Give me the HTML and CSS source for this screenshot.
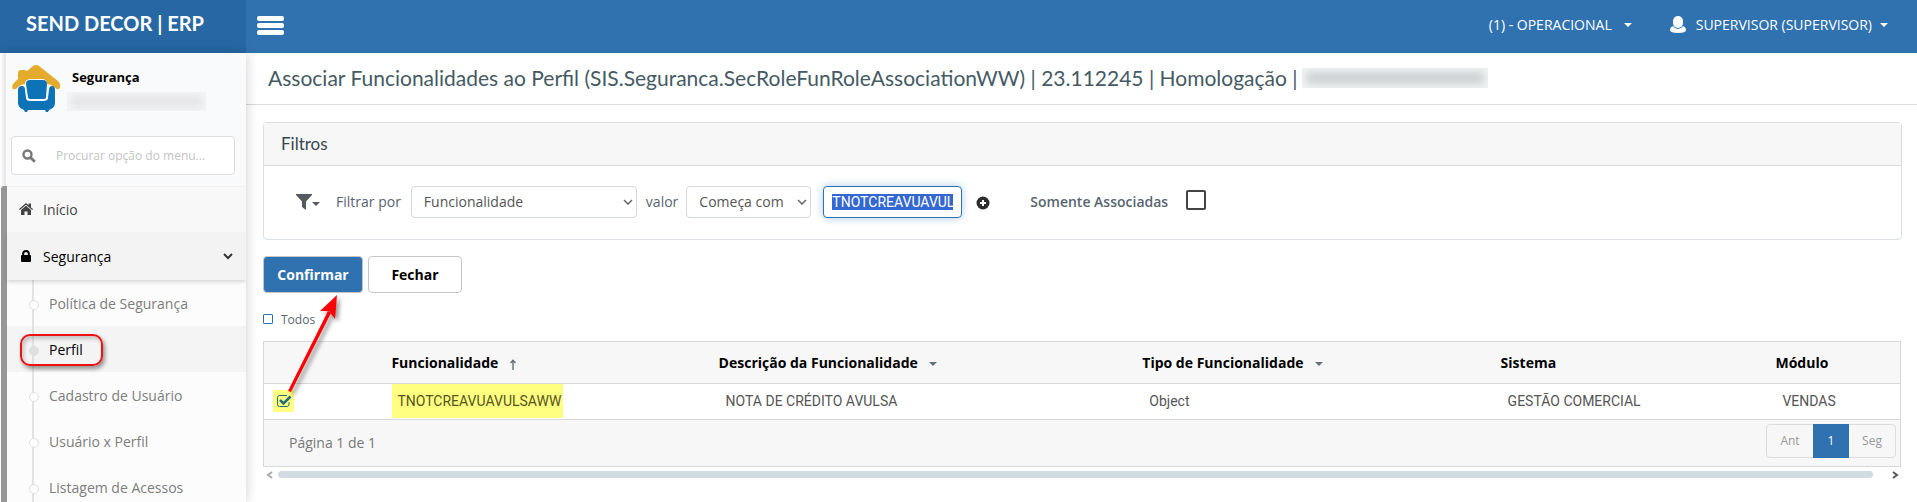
FILE: index.html
```html
<!DOCTYPE html>
<html lang="pt-BR">

<head>
    <meta charset="UTF-8">
    <meta name="viewport" content="width=device-width, initial-scale=1.0">
    <title>Associar Funcionalidades ao Perfil</title>
    <link rel="stylesheet" href="styles.css">
</head>

<body>

    <header class="topbar">
        <a class="brand" href="#">SEND DECOR | ERP</a>
        <button class="menu-toggle" type="button" aria-label="Menu">
            <span></span><span></span><span></span>
        </button>
        <div class="top-actions">
            <button type="button" class="top-link unit">(1) - OPERACIONAL <i class="caret"></i></button>
            <button type="button" class="top-link">
                <svg width="16" height="18" viewBox="0 0 16 18" fill="#fff"><rect x="3" y="0" width="10" height="12" rx="5"/><path d="M3 10Q0 11 0 14Q0 17 8 17Q16 17 16 14Q16 11 13 10Q11 13 8 13Q5 13 3 10Z"/></svg>
                SUPERVISOR (SUPERVISOR) <i class="caret"></i>
            </button>
        </div>
    </header>

    <div class="layout">
        <aside class="sidebar">
            <div class="profile">
                <svg class="logo" width="50" height="50" viewBox="0 0 50 50">
                    <path fill="#e5ab2d" d="M6 15V9Q6 6 9 6H12Q14 6 15 7L21 2Q24 0 27 2L46 17Q50 21 47 25Q45 26 42 23Q39 20 35 20Q35 15 30 15H19Q13 15 13 20Q9 20 6 23Q4 26 1 25Q-1 22 2 19Z"/>
                    <path fill="#0e73b6" d="M18 16H31Q35 16 35 20L34 33Q34 35 31 35H18Q16 35 16 33L14 20Q14 16 18 16Z"/>
                    <path fill="#0e73b6" d="M6 26Q6 22 10 22Q13 22 13 26L14 34Q14 37 18 37H31Q36 37 36 34L37 26Q37 22 40 22Q43 22 43 26V39Q43 44 37 46L36 48H34L33 46H16L15 48H13L12 46Q6 44 6 39Z"/>
                </svg>
                <div class="profile-text">
                    <strong>Segurança</strong>
                    <span class="redacted"></span>
                </div>
            </div>

            <div class="menu-search">
                <svg width="14" height="14" viewBox="0 0 14 14" fill="none" stroke="#777"><circle cx="5.5" cy="5.5" r="4" stroke-width="2.4"/><path d="M8.5 8.5L12.8 12.8" stroke-width="2.8"/></svg>
                <input type="text" placeholder="Procurar opção do menu..." aria-label="Procurar opção do menu">
            </div>

            <nav class="menu">
                <a class="menu-item" href="#">
                    <svg width="14" height="12" viewBox="0 0 14 12" fill="#444"><path d="M7 0L9.5 2.2V.6H12V4.4L14 6.1L13.2 7L7 1.8L.8 7L0 6.1Z"/><path d="M7 2.8L12 7V12H8.5V8.5H5.5V12H2V7Z"/></svg>
                    Início
                </a>
                <a class="menu-item open" href="#">
                    <svg width="14" height="12" viewBox="0 0 14 12"><rect x="2" y="5" width="10" height="7" rx="1" fill="#000"/><path d="M4.2 6V3.5Q4.2 1 7 1T9.8 3.5V6" fill="none" stroke="#000" stroke-width="2"/></svg>
                    Segurança
                    <svg class="chevron" width="10" height="7" viewBox="0 0 10 7" fill="none" stroke="#333" stroke-width="2"><path d="M1 1L5 5L9 1"/></svg>
                </a>
                <ul class="submenu">
                    <li><a href="#">Política de Segurança</a></li>
                    <li class="active"><a href="#">Perfil</a><span class="mark"></span></li>
                    <li><a href="#">Cadastro de Usuário</a></li>
                    <li><a href="#">Usuário x Perfil</a></li>
                    <li><a href="#">Listagem de Acessos</a></li>
                </ul>
            </nav>
        </aside>

        <main class="content">
            <h1>Associar Funcionalidades ao Perfil (SIS.Seguranca.SecRoleFunRoleAssociationWW) | 23.112245 | Homologação | <span class="redacted title-redacted"></span></h1>

            <section class="panel">
                <h2>Filtros</h2>
                <div class="filters">
                    <button class="filter-button" type="button" aria-label="Filtros">
                        <svg width="24" height="16" viewBox="0 0 24 16" fill="#555a5e"><path d="M0 0H16V1L10 7.5V16L6 13V7.5L0 1Z"/><path d="M16 8H24L20 12Z"/></svg>
                    </button>
                    <label for="campo">Filtrar por</label>
                    <select id="campo" class="field"><option>Funcionalidade</option></select>
                    <label for="operador">valor</label>
                    <select id="operador" class="operator"><option>Começa com</option></select>
                    <input id="valor" class="value" type="text" value="TNOTCREAVUAVUL" aria-label="Valor do filtro">
                    <button class="add-filter" type="button" aria-label="Adicionar filtro">
                        <svg width="14" height="14" viewBox="0 0 14 14"><circle cx="7" cy="7" r="6.5" fill="#2d2d2d"/><path d="M7 4V10M4 7H10" stroke="#fff" stroke-width="2"/></svg>
                    </button>
                    <label class="only-label" for="associadas">Somente Associadas</label>
                    <input class="only-check" id="associadas" type="checkbox">
                </div>
            </section>

            <div class="actions">
                <button class="btn primary" type="button">Confirmar</button>
                <button class="btn" type="button">Fechar</button>
            </div>

            <div class="all">
                <input type="checkbox" id="todos">
                <label for="todos">Todos</label>
            </div>

            <div class="grid">
                <table>
                    <colgroup>
                        <col class="c-check"><col class="c-name"><col class="c-desc"><col class="c-type"><col class="c-system"><col class="c-module">
                    </colgroup>
                    <thead>
                        <tr>
                            <th></th>
                            <th>Funcionalidade <svg class="sort" width="6" height="11" viewBox="0 0 6 11" fill="none" stroke="#62727b"><path d="M3 11V1.5M.5 4L3 1.2L5.5 4" stroke-width="1.4"/></svg></th>
                            <th>Descrição da Funcionalidade <i class="caret sort"></i></th>
                            <th>Tipo de Funcionalidade <i class="caret sort"></i></th>
                            <th>Sistema</th>
                            <th>Módulo</th>
                        </tr>
                    </thead>
                    <tbody>
                        <tr>
                            <td class="check-cell"><span class="check-mark"><input type="checkbox" checked aria-label="Selecionar TNOTCREAVUAVULSAWW"></span></td>
                            <td class="name-cell"><span>TNOTCREAVUAVULSAWW</span></td>
                            <td>NOTA DE CRÉDITO AVULSA</td>
                            <td>Object</td>
                            <td>GESTÃO COMERCIAL</td>
                            <td>VENDAS</td>
                        </tr>
                    </tbody>
                </table>
                <div class="pager">
                    <span>Página 1 de 1</span>
                    <div class="pages">
                        <button type="button">Ant</button>
                        <button type="button" class="current">1</button>
                        <button type="button">Seg</button>
                    </div>
                </div>
            </div>

            <div class="hscroll">
                <svg width="7" height="8" viewBox="0 0 7 8" fill="none" stroke="#aaa" stroke-width="2"><path d="M6 1L2 4L6 7"/></svg>
                <div class="thumb"></div>
                <svg width="7" height="8" viewBox="0 0 7 8" fill="none" stroke="#555" stroke-width="2"><path d="M1 1L5 4L1 7"/></svg>
            </div>

            <svg class="arrow" width="60" height="106" viewBox="0 0 60 106">
                <path d="M2 98L42 18L45 20L5 99Z" fill="#f00"/>
                <path d="M51 2L49 26L43 18L34 18Z" fill="#f00"/>
            </svg>
        </main>
    </div>

    <script>
        // start with the filter value selected
        document.getElementById('valor').select();
    </script>

</body>

</html>
```
FILE: styles.css
```css
* {
    box-sizing: border-box;
}

body {
    margin: 0;
    height: 100vh;
    display: flex;
    flex-direction: column;
    overflow: hidden;
    font-family: "Open Sans", sans-serif;
    font-size: 14px;
    color: #566570;
    background: #fff;
}

button,
input,
select {
    font: inherit;
    color: inherit;
}

button {
    padding: 0;
    border: none;
    background: none;
    cursor: pointer;
}

a {
    color: inherit;
    text-decoration: none;
}

/* top bar */
.topbar {
    flex: none;
    height: 53px;
    display: flex;
    align-items: center;
    background: #3072af;
    color: #fff;
}

.brand {
    width: 246px;
    height: 53px;
    padding-left: 26px;
    background: #2768a4;
    font-family: Lato, sans-serif;
    font-size: 20px;
    font-weight: bold;
    line-height: 46px;
}

.menu-toggle {
    display: flex;
    flex-direction: column;
    gap: 2px;
    margin: 0 0 2px 11px;
}

.menu-toggle span {
    width: 27px;
    height: 5px;
    border-radius: 2px;
    background: #fff;
}

.top-actions {
    display: flex;
    gap: 38px;
    margin-left: auto;
    padding: 0 29px 4px 0;
}

.top-link {
    display: flex;
    align-items: center;
    gap: 8px;
}

.top-link svg {
    margin-right: 2px;
}

.unit {
    gap: 12px;
}

.caret {
    display: inline-block;
    border: 4px solid transparent;
    border-top-color: currentColor;
    border-bottom: none;
}

.layout {
    flex: 1;
    min-height: 0;
    display: flex;
}

/* sidebar */
.sidebar {
    flex: none;
    width: 246px;
    display: flex;
    flex-direction: column;
    overflow: hidden;
    background: linear-gradient(90deg, #fff, #e4e4e4 6px, #f9fafc 6px);
    z-index: 1;
    box-shadow: 0 0 12px rgba(0, 0, 0, 0.2);
}

.profile {
    display: flex;
    gap: 10px;
    height: 83px;
    padding: 11px 0 0 12px;
}

.logo {
    flex: none;
}

.profile-text strong {
    display: block;
    margin: 3px 0 5px;
    font-size: 13px;
    line-height: 20px;
    color: #000;
}

.redacted {
    display: block;
    width: 139px;
    height: 19px;
    background: #e3e4e6;
    box-shadow: inset 0 0 8px 4px #f4f5f7;
}

.profile-text .redacted {
    margin-left: -5px;
}

.menu-search {
    flex: none;
    display: flex;
    align-items: center;
    height: 39px;
    margin: 0 11px 11px;
    padding-left: 10px;
    border: 1px solid #ddd;
    border-radius: 4px;
    background: #fff;
}

.menu-search input {
    flex: 1;
    min-width: 0;
    padding: 0 0 0 20px;
    border: none;
    outline: none;
    background: none;
    font-size: 12px;
}

.menu-search input::placeholder {
    color: #c4c4c4;
}

.menu {
    flex: 1;
    min-height: 0;
    margin-left: 1px;
    border-left: 6px solid #979797;
    border-top-left-radius: 3px;
    background: #fcfcfc;
}

.menu-item {
    display: flex;
    align-items: center;
    gap: 10px;
    height: 47px;
    padding: 0 13px 2px 12px;
    border-top: 1px solid #f1f1f1;
    background: #f8f8f8;
    color: #444;
}

.menu-item.open {
    position: relative;
    background: #f3f3f3;
    color: #000;
    box-shadow: 0 2px 4px rgba(0, 0, 0, 0.15);
}

.chevron {
    margin-left: auto;
}

.submenu {
    margin: 0;
    padding: 0;
    list-style: none;
    color: #7d7d7d;
    background: linear-gradient(#e3e3e3, #e3e3e3) 25px 0 / 2px 100% no-repeat;
}

.submenu li {
    position: relative;
    height: 46px;
    line-height: 48px;
}

.submenu a {
    display: block;
    padding-left: 42px;
}

.submenu li::before {
    content: "";
    position: absolute;
    top: 20px;
    left: 22px;
    width: 8px;
    height: 8px;
    border: 1px solid #e0e0e0;
    border-radius: 50%;
    background: #fff;
}

.submenu .active {
    background: linear-gradient(#e0e0e0, #e0e0e0) 25px 0 / 2px 100% no-repeat #f4f4f4;
    color: #000;
}

.submenu .active::before {
    background: #e0e0e0;
}

.mark {
    position: absolute;
    top: 8px;
    left: 13px;
    width: 83px;
    height: 32px;
    border: 2px solid #ee1111;
    border-radius: 10px;
    box-shadow: 2px 3px 4px rgba(0, 0, 0, 0.4), inset 2px 3px 4px rgba(0, 0, 0, 0.2);
}

/* content */
.content {
    position: relative;
    flex: 1;
    min-width: 0;
}

h1 {
    display: flex;
    align-items: center;
    gap: 4px;
    height: 52px;
    margin: 0 0 17px;
    padding: 0 0 2px 22px;
    border-bottom: 1px solid #d8dadb;
    font-family: Lato, sans-serif;
    font-size: 21px;
    font-weight: normal;
    color: #455a64;
}

.title-redacted {
    width: 186px;
    height: 20px;
    background: #ccd0d2;
    box-shadow: inset 0 0 8px 4px #f2f4f4;
}

.panel {
    margin: 0 15px 0 17px;
    border: 1px solid #d9dfe2;
    border-radius: 4px;
}

h2 {
    height: 43px;
    margin: 0;
    padding-left: 17px;
    border-bottom: 1px solid #d8dcde;
    background: #f7f7f7;
    font-family: Lato, sans-serif;
    font-size: 17px;
    font-weight: normal;
    line-height: 42px;
    color: #37474f;
}

.filters {
    display: flex;
    align-items: center;
    height: 73px;
    padding: 0 0 2px 32px;
}

.filter-button {
    height: 16px;
    margin-right: 16px;
}

.filters select,
.value {
    height: 32px;
    border: 1px solid #d5dadd;
    border-radius: 4px;
    background: #fff;
}

.filters select {
    appearance: none;
    padding: 0 12px;
    color: #555;
    background: #fff url("data:image/svg+xml,%3Csvg xmlns='http://www.w3.org/2000/svg' width='10' height='6' fill='none' stroke='%23666' stroke-width='1.5'%3E%3Cpath d='M1 1L5 5L9 1'/%3E%3C/svg%3E") no-repeat right 3px center;
}

.filters .field {
    width: 226px;
    margin: 0 9px 0 10px;
}

.filters .operator {
    width: 125px;
    margin: 0 12px 0 8px;
}

.value {
    width: 139px;
    padding: 0 8px;
    border-color: #3072af;
    outline: none;
    box-shadow: 0 0 8px #a9cbe8;
    font-family: Roboto, sans-serif;
}

.value::selection {
    background: #3367d1;
    color: #fff;
}

.add-filter {
    height: 14px;
    margin: 0 40px 0 14px;
}

.only-label {
    font-weight: 600;
}

.only-check {
    appearance: none;
    width: 20px;
    height: 20px;
    margin: 0 0 4px 18px;
    border: 2px solid #444;
    border-radius: 2px;
}

.actions {
    display: flex;
    gap: 5px;
    margin: 16px 0 0 17px;
}

.btn {
    width: 94px;
    height: 37px;
    border: 1px solid #c6c6c6;
    border-radius: 4px;
    background: #fff;
    color: #000;
    font-weight: bold;
}

.btn.primary {
    width: 100px;
    background: #3072af;
    color: #fff;
}

.all {
    display: flex;
    align-items: center;
    gap: 8px;
    height: 20px;
    margin: 16px 0 12px 17px;
    font-size: 12px;
}

.all input {
    appearance: none;
    width: 10px;
    height: 10px;
    margin: 0;
    border: 1px solid #3072af;
    border-radius: 1px;
}

.grid {
    margin: 0 16px 0 17px;
    border: 1px solid #d8d8d8;
}

table {
    width: 100%;
    table-layout: fixed;
    border-collapse: collapse;
}

.c-check { width: 7.3%; }
.c-name { width: 20%; }
.c-desc { width: 25.9%; }
.c-type { width: 21.9%; }
.c-system { width: 16.8%; }
.c-module { width: 8.1%; }

th {
    height: 41px;
    padding: 0 0 0 8px;
    border-bottom: 1px solid #d8d8d8;
    background: #f7f7f7;
    text-align: left;
    white-space: nowrap;
    color: #000;
}

th .sort {
    margin-left: 8px;
    color: #62727b;
    vertical-align: middle;
}

td {
    height: 36px;
    padding: 0 0 0 15px;
    border-bottom: 1px solid #d8d8d8;
    font-family: Roboto, sans-serif;
    color: #555;
}

.check-cell {
    padding-left: 9px;
}

.check-mark {
    display: flex;
    align-items: center;
    width: 21px;
    height: 22px;
    padding-left: 4px;
    background: #ffff80;
}

.check-mark input {
    appearance: none;
    width: 15px;
    height: 14px;
    margin: 0;
    background: url("data:image/svg+xml,%3Csvg xmlns='http://www.w3.org/2000/svg' width='15' height='14' fill='none' stroke='%23236d7c'%3E%3Cpath d='M12 8V10Q12 12.500 10 12.500H2.500Q.5 12.500 .5 10.500V3.500Q.5 1.500 2.500 1.500H10'/%3E%3Cpath d='M3 6L6.500 9.500L13.500 2.500' stroke-width='2.500'/%3E%3C/svg%3E") no-repeat;
}

.name-cell {
    padding-left: 9px;
}

.name-cell span {
    display: inline-block;
    padding: 0 2px 0 5px;
    background: #ffff80;
    color: #55551e;
    line-height: 34px;
}

.pager {
    display: flex;
    align-items: center;
    justify-content: space-between;
    height: 46px;
    padding: 0 4px 0 25px;
    background: #f7f7f7;
    color: #777;
}

.pages {
    display: flex;
    height: 34px;
    margin-bottom: 4px;
    border: 1px solid #ddd;
    border-radius: 4px;
    font-size: 12px;
    color: #999;
}

.pages button {
    width: 46px;
}

.pages .current {
    width: 36px;
    margin: -1px 0;
    background: #3072af;
    color: #fff;
}

.hscroll {
    display: flex;
    align-items: center;
    margin: 4px 18px 0 20px;
}

.thumb {
    flex: 1;
    height: 7px;
    margin: 0 19px 0 5px;
    border-radius: 4px;
    background: #d0dbe2;
}

/* arrow from the ticked row to the confirm button */
.arrow {
    position: absolute;
    top: 240px;
    left: 40px;
    filter: drop-shadow(3px 3px 2px rgba(0, 0, 0, 0.4));
    pointer-events: none;
}
```
